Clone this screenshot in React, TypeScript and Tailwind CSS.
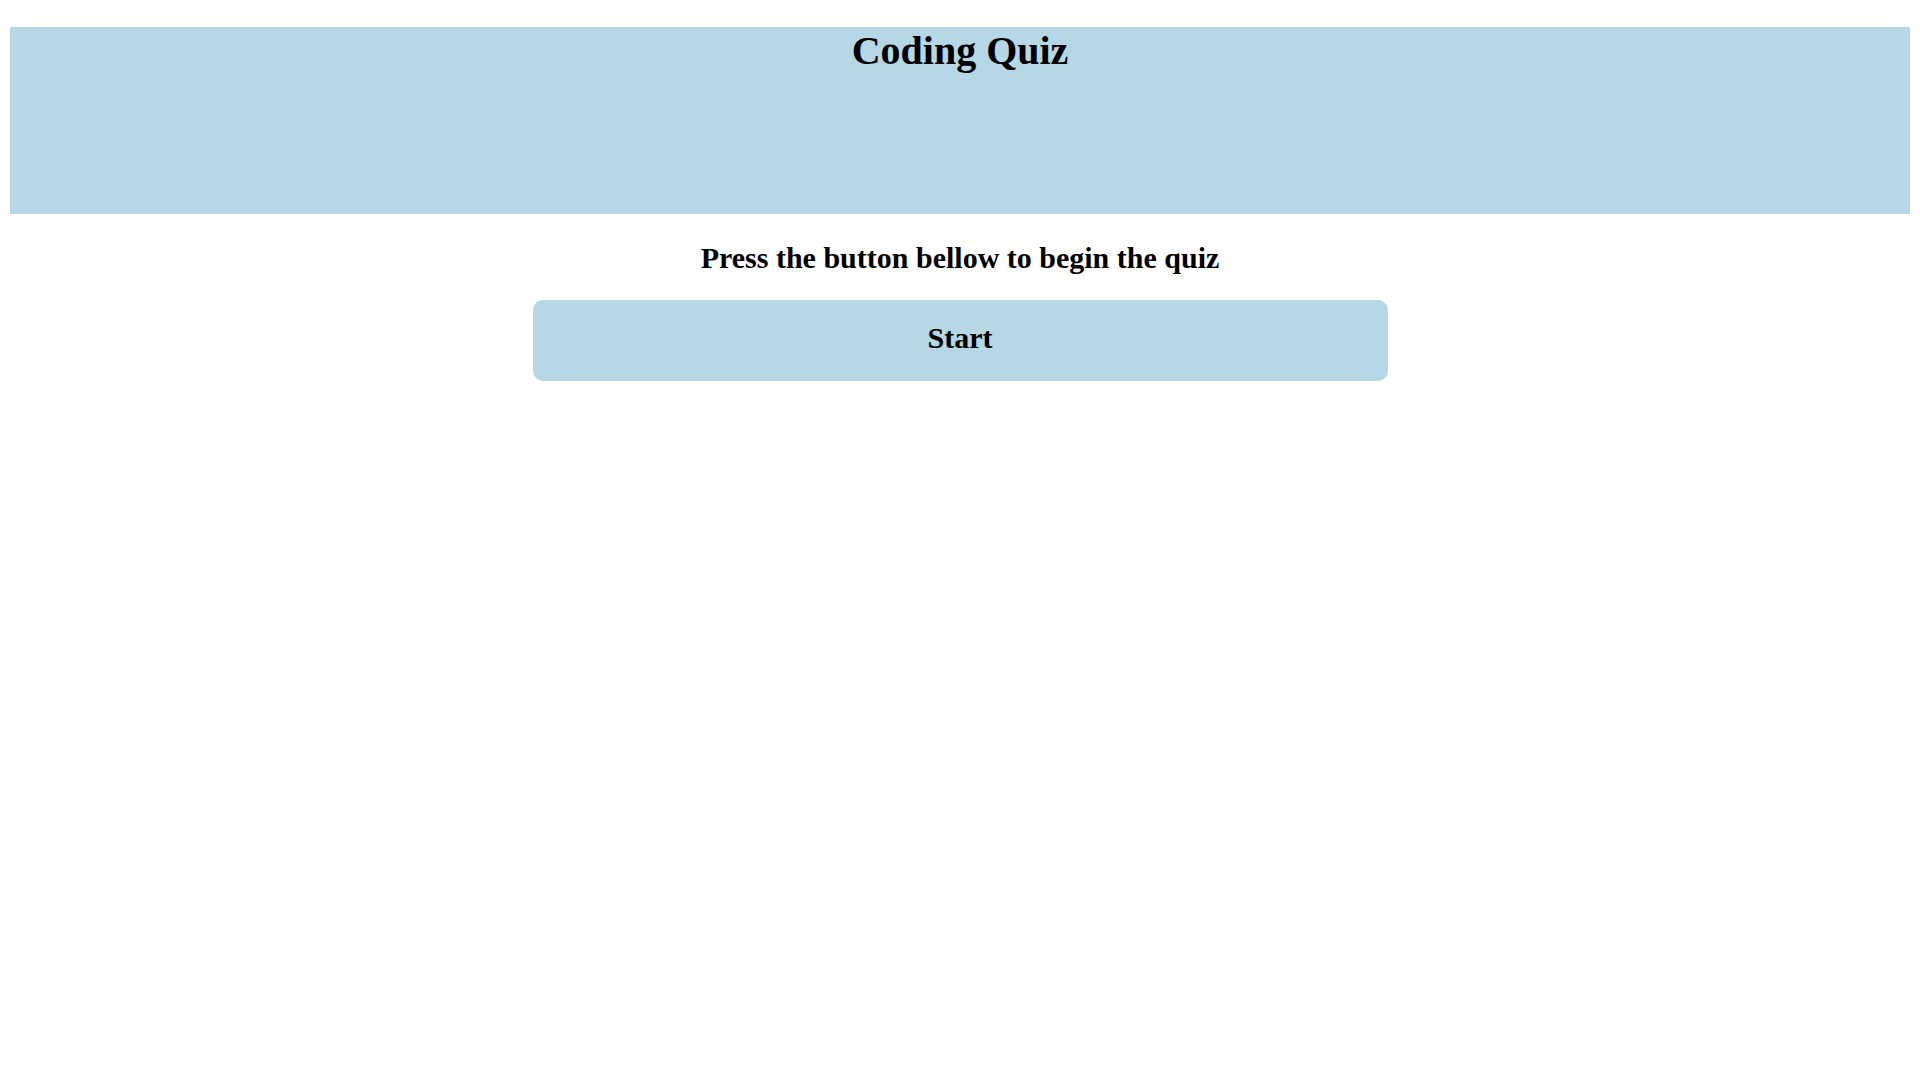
const App = () => {
  return (
    <div
      className="min-h-screen bg-white px-[10px] pt-[27px] text-black"
      style={{ fontFamily: '"Liberation Serif", "Times New Roman", serif' }}
    >
      <header className="h-[187px] bg-[#b5d7e6]">
        <h1 className="text-center text-[40px] font-bold leading-[48px]">Coding Quiz</h1>
      </header>
      <main className="flex flex-col items-center">
        <p className="mt-[26px] text-center text-[30px] font-bold leading-[35px]">
          Press the button bellow to begin the quiz
        </p>
        <button className="mt-[25px] h-[81px] w-[855px] rounded-[10px] bg-[#b5d7e6] pb-[6px] text-[30px] font-bold leading-[35px]">
          Start
        </button>
      </main>
    </div>
  );
};

export default App;
